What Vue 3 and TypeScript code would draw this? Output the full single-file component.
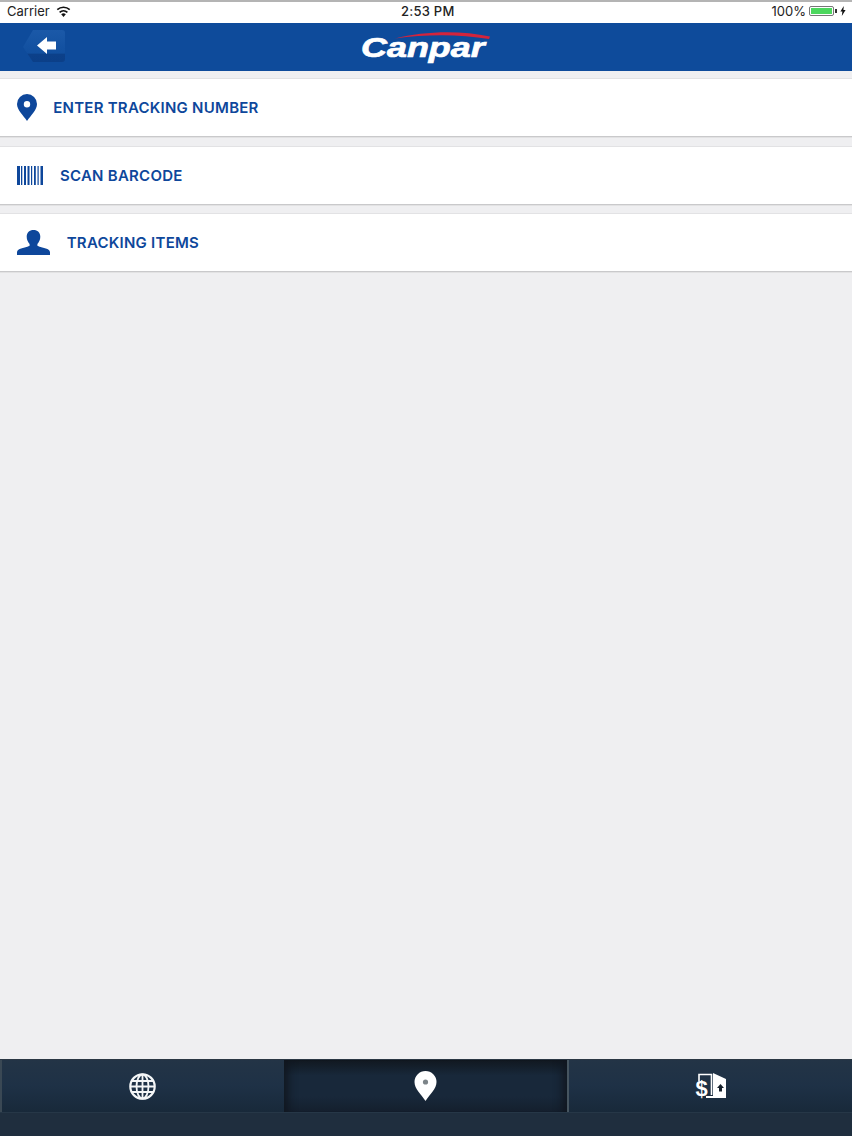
<template>
  <div class="screen">
    <div class="status-bar">
      <div class="status-left">
        <span>Carrier</span>
        <svg class="wifi" width="15" height="11" viewBox="0 0 15 11">
          <path d="M7.5 11 5.2 8.2a3.4 3.4 0 0 1 4.6 0Z" fill="#111" />
          <path d="M3.6 6.4a5.8 5.8 0 0 1 7.8 0" fill="none" stroke="#111" stroke-width="1.6" />
          <path d="M1.3 3.7a9.2 9.2 0 0 1 12.4 0" fill="none" stroke="#111" stroke-width="1.6" />
        </svg>
      </div>
      <span class="clock">2:53 PM</span>
      <div class="status-right">
        <span>100%</span>
        <span class="battery"><span class="battery-fill"></span></span>
        <span class="battery-tip"></span>
        <svg width="6" height="10" viewBox="0 0 6 10"><path d="M3.8 0 0.4 5.6h2L1.8 10l3.8-6H3.4Z" fill="#111" /></svg>
      </div>
    </div>

    <header class="nav-bar">
      <button class="back-btn" type="button" aria-label="Back">
        <svg width="44" height="36" viewBox="0 0 44 36">
          <defs>
            <linearGradient id="backFill" x1="0" y1="0" x2="0" y2="1">
              <stop offset="0" stop-color="#1b59a8" />
              <stop offset="0.72" stop-color="#114f9f" />
              <stop offset="0.76" stop-color="#0c4089" />
              <stop offset="1" stop-color="#0b3f88" />
            </linearGradient>
          </defs>
          <path d="M11 2H40a3 3 0 0 1 3 3V31a3 3 0 0 1-3 3H11L1 19Z" fill="url(#backFill)" />
          <path d="M15 17.500 25 9V13.500H34V21.500H25V26Z" fill="#fff" />
        </svg>
      </button>
      <div class="logo">
        <svg class="logo-arc" width="100" height="10" viewBox="0 0 100 10">
          <path d="M1 7.500C30 0 66 -1 96 5.500L95 8C66 3 32 3 1 7.500Z" fill="#d4243c" />
        </svg>
        <span class="logo-text">Canpar</span>
      </div>
    </header>

    <main class="menu">
      <a v-for="item in items" :key="item.label" class="menu-row">
        <span class="row-icon" :style="{ width: item.iconWidth + 'px' }">
          <svg v-if="item.icon === 'pin'" width="20" height="27" viewBox="0 0 20 27">
            <path fill-rule="evenodd" d="M10 0a10 10 0 0 1 10 10C20 16 14 21 10 27 6 21 0 16 0 10A10 10 0 0 1 10 0Zm0 7a3.200 3.200 0 1 0 0 6.400 3.200 3.200 0 0 0 0-6.400Z" fill="#0e479b" />
          </svg>
          <svg v-else-if="item.icon === 'barcode'" width="26" height="19" viewBox="0 0 26 19">
            <rect v-for="bar in bars" :key="bar[0]" :x="bar[0]" y="0" :width="bar[1]" height="19" fill="#0e479b" />
          </svg>
          <svg v-else width="33" height="25" viewBox="0 0 33 25">
            <path d="M16.500 0c4 0 6.800 2.600 6.800 6.800 0 3-1.300 5.400-2.900 7.100v1.900c2.500 1.300 7.200 2 10 3.200 1.800.8 2.600 2 2.600 3.600V25H0v-2.400c0-1.600.8-2.800 2.600-3.600 2.800-1.200 7.500-1.900 10-3.200v-1.900c-1.600-1.700-2.900-4.100-2.900-7.100C9.700 2.600 12.500 0 16.500 0Z" fill="#0e479b" />
          </svg>
        </span>
        <span class="row-label">{{ item.label }}</span>
      </a>
    </main>

    <footer class="tab-area">
      <nav class="tab-bar">
        <div class="tab">
          <svg width="27" height="27" viewBox="0 0 27 27" fill="none" stroke="#f4f6f7" stroke-width="1.800">
            <circle cx="13.500" cy="13.500" r="12.200" stroke-width="2.200" />
            <ellipse cx="13.500" cy="13.500" rx="6" ry="12" />
            <path d="M13.500 1.500v24M1.500 13.500h24M3 8h21M3 19h21" />
          </svg>
        </div>
        <div class="tab tab-active">
          <svg width="23" height="30" viewBox="0 0 23 30">
            <path d="M11.500 0a11 11 0 0 1 11 11C22.500 18 16 23 11.500 30 7 23 .5 18 .5 11a11 11 0 0 1 11-11Z" fill="#fff" />
            <circle cx="11.500" cy="11" r="2.600" fill="#7c8488" />
          </svg>
        </div>
        <div class="tab">
          <span class="bill-icon">
            <svg width="30" height="26" viewBox="0 0 30 26">
              <path d="M3 8.500V1.500H15.500V22" fill="none" stroke="#fff" stroke-width="1.600" />
              <path d="M17 0l13 6V25H10v-2H17Z" fill="#fff" />
              <path d="M24.500 11 28 15h-2v3.500h-3V15h-2Z" fill="#16202b" />
            </svg>
            <span class="bill-dollar">$</span>
          </span>
        </div>
      </nav>
      <div class="tab-base"></div>
    </footer>
  </div>
</template>

<script setup lang="ts">
interface MenuItem {
  label: string
  icon: 'pin' | 'barcode' | 'person'
  iconWidth: number
}

const items: MenuItem[] = [
  { label: 'ENTER TRACKING NUMBER', icon: 'pin', iconWidth: 36.5 },
  { label: 'SCAN BARCODE', icon: 'barcode', iconWidth: 43.3 },
  { label: 'TRACKING ITEMS', icon: 'person', iconWidth: 50 }
]

const bars: [number, number][] = [
  [0, 3],
  [4, 1.3],
  [7, 2],
  [10.5, 2],
  [14, 1.2],
  [17, 1.8],
  [20.5, 1.2],
  [23.5, 2.5]
]
</script>

<style>
html,
body {
  margin: 0;
  background: #efeff1;
}
</style>

<style scoped>
.screen {
  width: 852px;
  height: 1136px;
  display: flex;
  flex-direction: column;
  background: #efeff1;
  overflow: hidden;
  font-family: 'Liberation Sans', Arial, sans-serif;
}

.status-bar {
  height: 23px;
  flex: none;
  display: flex;
  align-items: center;
  justify-content: space-between;
  position: relative;
  box-sizing: border-box;
  padding: 0 6px 3px 7px;
  background: #fff;
  border-top: 2px solid #b4b4b4;
  color: #222;
  font-size: 13px;
  font-family: Inter, 'Liberation Sans', sans-serif;
}

.status-left,
.status-right {
  display: flex;
  align-items: center;
}

.wifi {
  margin-left: 6px;
}

.clock {
  position: absolute;
  left: 401px;
  top: 1px;
  font-weight: 500;
  letter-spacing: 0.25px;
}

.battery {
  width: 25px;
  height: 10px;
  margin-left: 3px;
  padding: 1px;
  box-sizing: border-box;
  border: 1px solid #777;
  border-radius: 2px;
}

.battery-fill {
  display: block;
  height: 100%;
  background: #4cd75e;
}

.battery-tip {
  width: 2px;
  height: 4px;
  margin: 0 3px 0 1px;
  background: #333;
}

.nav-bar {
  height: 48px;
  flex: none;
  position: relative;
  display: flex;
  align-items: center;
  justify-content: center;
  background: #0e4b9b;
}

.back-btn {
  position: absolute;
  left: 22px;
  top: 5px;
  width: 44px;
  height: 36px;
  padding: 0;
  border: 0;
  background: none;
}

.logo {
  position: relative;
  width: 130px;
  height: 48px;
}

.logo-arc {
  position: absolute;
  left: 33px;
  top: 8px;
}

.logo-text {
  position: absolute;
  left: 0;
  top: 5px;
  color: #fff;
  font-size: 27px;
  line-height: 40px;
  font-weight: 700;
  font-style: italic;
  transform: scaleX(1.33);
  transform-origin: left center;
  -webkit-text-stroke: 0.7px #fff;
}

.menu {
  flex: 1;
  display: flex;
  flex-direction: column;
  gap: 8.5px;
  padding-top: 7px;
}

.menu-row {
  height: 59px;
  box-sizing: border-box;
  display: flex;
  align-items: center;
  padding-left: 16.7px;
  background: #fff;
  border-top: 1px solid #e2e2e4;
  border-bottom: 1px solid #c9c9cb;
  box-shadow: 0 1px 0 #e2e2e3;
  color: #0e479b;
}

.row-icon {
  display: flex;
  align-items: center;
  flex: none;
}

.row-label {
  font-family: Inter, 'Liberation Sans', sans-serif;
  font-size: 15px;
  font-weight: 600;
  letter-spacing: 0.25px;
}

.tab-area {
  flex: none;
  background: #1f2e3e;
}

.tab-bar {
  height: 54px;
  display: grid;
  grid-template-columns: 284px 285px 1fr;
  border-top: 1px solid #2a3743;
  border-bottom: 1px solid #263747;
  box-sizing: border-box;
}

.tab {
  display: flex;
  align-items: center;
  justify-content: center;
  background: linear-gradient(180deg, #233446 0%, #1e3146 50%, #18293a 100%);
}

.tab-active {
  background: linear-gradient(180deg, #111820 0%, #18283a 30%, #18283a 70%, #141f2d 100%);
  box-shadow: inset 14px 0 10px -10px #10161f, inset -14px 0 10px -10px #10161f;
  border-right: 2px solid #465560;
}

.tab:first-child {
  box-shadow: inset 2px 0 0 #3a4854;
}

.bill-icon {
  position: relative;
  width: 30px;
  height: 26px;
  display: block;
}

.bill-icon svg {
  display: block;
}

.bill-dollar {
  position: absolute;
  left: 0;
  top: 5px;
  color: #fff;
  font-size: 22px;
  line-height: 22px;
  font-weight: 700;
}

.tab-base {
  height: 23px;
}
</style>
